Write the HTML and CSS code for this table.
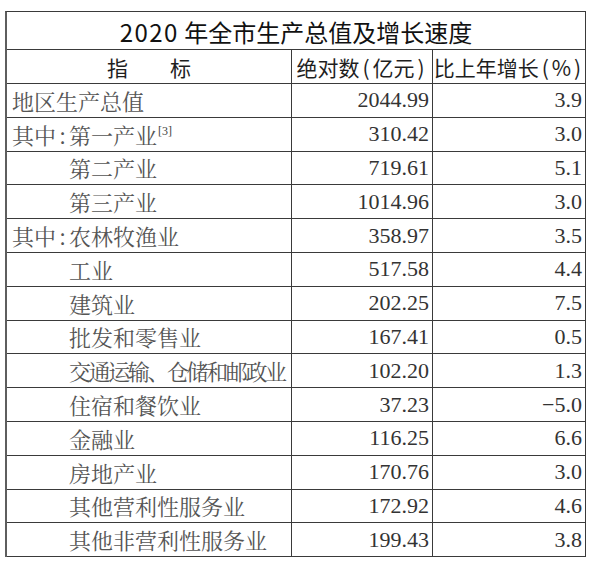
FILE: index.html
```html
<!DOCTYPE html>
<html lang="zh-CN">
<head>
<meta charset="utf-8">
<title>2020年全市生产总值及增长速度</title>
<link rel="stylesheet" href="styles.css">
</head>
<body>
<div class="sheet">
  <div class="title"><span><span class="yr">2020</span> 年全市生产总值及增长速度</span></div>

  <div class="hd hd-name"><span>指　　标</span></div>
  <div class="hd"><span>绝对数<span class="p">(</span>亿元<span class="p">)</span></span></div>
  <div class="hd"><span>比上年增长<span class="p">(</span>%<span class="p">)</span></span></div>

  <div class="name"><span>地区生产总值</span></div><div class="num">2044.99</div><div class="num">3.9</div>
  <div class="name"><span>其中<span class="colon">:</span>第一产业<sup class="note">[3]</sup></span></div><div class="num">310.42</div><div class="num">3.0</div>
  <div class="name sub"><span>第二产业</span></div><div class="num">719.61</div><div class="num">5.1</div>
  <div class="name sub"><span>第三产业</span></div><div class="num">1014.96</div><div class="num">3.0</div>
  <div class="name"><span>其中<span class="colon">:</span>农林牧渔业</span></div><div class="num">358.97</div><div class="num">3.5</div>
  <div class="name sub"><span>工业</span></div><div class="num">517.58</div><div class="num">4.4</div>
  <div class="name sub"><span>建筑业</span></div><div class="num">202.25</div><div class="num">7.5</div>
  <div class="name sub"><span>批发和零售业</span></div><div class="num">167.41</div><div class="num">0.5</div>
  <div class="name sub tight"><span>交通运输、仓储和邮政业</span></div><div class="num">102.20</div><div class="num">1.3</div>
  <div class="name sub"><span>住宿和餐饮业</span></div><div class="num">37.23</div><div class="num">−5.0</div>
  <div class="name sub"><span>金融业</span></div><div class="num">116.25</div><div class="num">6.6</div>
  <div class="name sub"><span>房地产业</span></div><div class="num">170.76</div><div class="num">3.0</div>
  <div class="name sub"><span>其他营利性服务业</span></div><div class="num">172.92</div><div class="num">4.6</div>
  <div class="name sub"><span>其他非营利性服务业</span></div><div class="num">199.43</div><div class="num">3.8</div>
</div>
</body>
</html>
```

FILE: styles.css
```css
html, body {
  margin: 0;
  padding: 0;
  background: #ffffff;
}

body {
  padding: 11px 0 0 5px;
}

.sheet {
  display: grid;
  grid-template-columns: 285px 141px 153px;
  grid-template-rows: 38px 34px repeat(14, 33.8px);
  width: 579px;
  border-top: 1px solid #3a3a3a;
  border-left: 2px solid #5e5e5e;
  color: #333;
}

.sheet > div {
  box-sizing: border-box;
  border-right: 1px solid #3a3a3a;
  border-bottom: 1px solid #3a3a3a;
  display: flex;
  align-items: center;
  white-space: nowrap;
}

.title {
  grid-column: 1 / 4;
  justify-content: center;
  font-family: "Noto Sans CJK SC", "Noto Sans", sans-serif;
  font-size: 24px;
  color: #111;
  padding-top: 1px;
}

.yr {
  letter-spacing: 1.5px;
}

.hd {
  justify-content: center;
  font-family: "Noto Sans CJK SC", "Noto Sans", sans-serif;
  font-size: 21px;
  color: #1e1e1e;
}

.hd .p {
  display: inline-block;
  width: 13px;
  text-align: center;
}

.name {
  font-family: "Noto Serif CJK SC", "Noto Sans CJK SC", serif;
  font-size: 22px;
  color: #555;
  padding-left: 5px;
}

.name.sub {
  padding-left: 62px;
}

.name.tight {
  letter-spacing: -2.4px;
}

.colon {
  display: inline-block;
  width: 13px;
  text-align: center;
}

.note {
  font-family: "Liberation Serif", serif;
  font-size: 12px;
  vertical-align: 9px;
  line-height: 0;
  margin-left: 1px;
  color: #444;
}

.num {
  justify-content: flex-end;
  font-family: "Liberation Serif", "Times New Roman", serif;
  font-size: 22px;
  color: #333;
  padding-right: 3px;
}
```
